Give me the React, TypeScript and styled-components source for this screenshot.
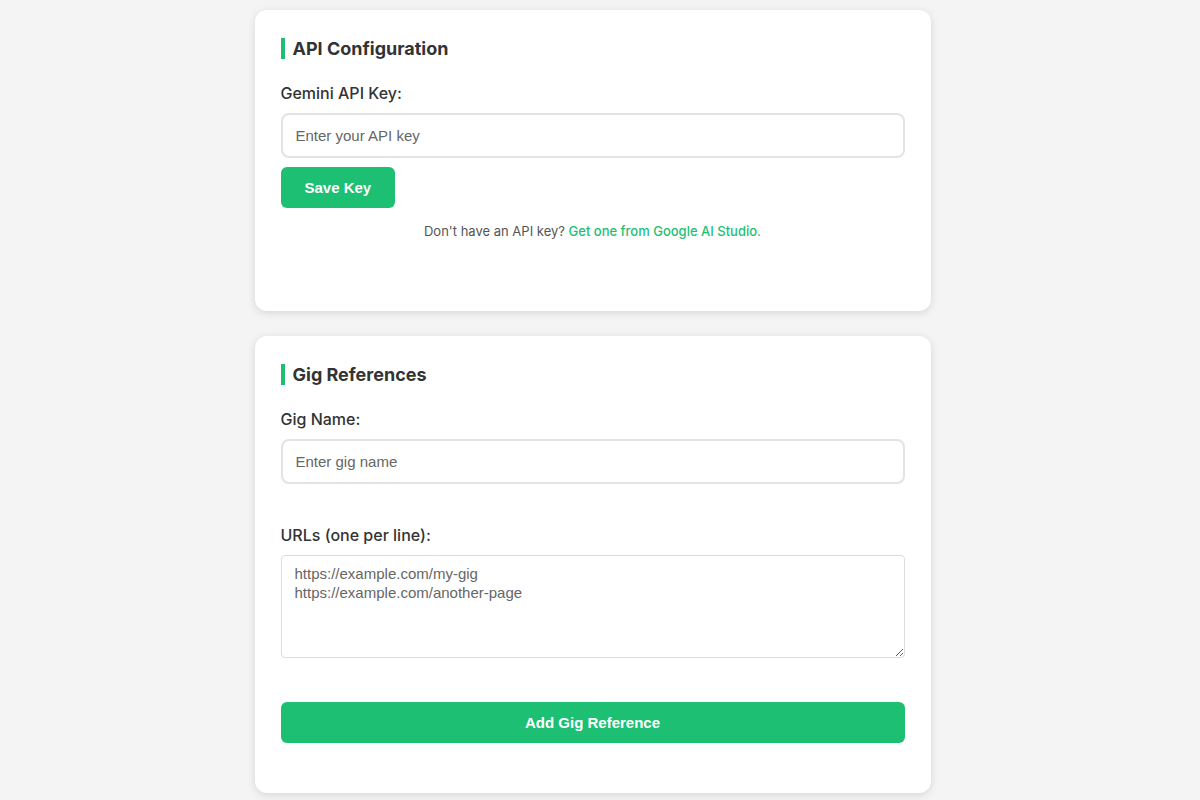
import styled, { createGlobalStyle } from "styled-components";

const green = "#1dbf73";

const GlobalStyle = createGlobalStyle`
  html, body {
    margin: 0;
    padding: 0;
    background: #f4f4f4;
    font-family: Inter, "Noto Sans", sans-serif;
    color: #333;
  }
  * {
    box-sizing: border-box;
  }
`;

const Page = styled.div`
  display: flex;
  flex-direction: column;
  align-items: center;
  gap: 25px;
  padding: 10px 15px 20px 0;
`;

const Card = styled.section`
  width: 676px;
  background: #fff;
  border-radius: 12px;
  box-shadow: 0 2px 8px rgba(0, 0, 0, 0.12);
  padding: 28px 26px 50px;
`;

const Title = styled.h2`
  margin: 0 0 24px;
  padding-left: 8px;
  border-left: 4px solid ${green};
  font-size: 18px;
  line-height: 21px;
  font-weight: 700;
  color: #333;
`;

const Group = styled.div<{ $gap?: number }>`
  display: flex;
  flex-direction: column;
  margin-bottom: ${(p) => p.$gap ?? 9}px;
`;

const Label = styled.label`
  font-size: 16px;
  line-height: 20px;
  font-weight: 500;
  color: #333;
  margin-bottom: 10px;
`;

const Input = styled.input`
  width: 100%;
  height: 45px;
  padding: 0 13px;
  border: 2px solid #e3e3e3;
  border-radius: 8px;
  font-family: "Liberation Sans", Arial, sans-serif;
  font-size: 15px;
  color: #333;
  outline: none;
  &::placeholder {
    color: #666;
  }
`;

const TextArea = styled.textarea`
  width: 100%;
  height: 103px;
  padding: 8px 13px;
  border: 1px solid #ddd;
  border-radius: 4px;
  font-family: "Liberation Sans", Arial, sans-serif;
  font-size: 15px;
  line-height: 19px;
  color: #555;
  resize: vertical;
  outline: none;
  &::placeholder {
    color: #666;
  }
`;

const Button = styled.button<{ $full?: boolean }>`
  width: ${(p) => (p.$full ? "100%" : "auto")};
  height: 41px;
  padding: 0 24px;
  border: none;
  border-radius: 6px;
  background: ${green};
  color: #fff;
  font-family: "Liberation Sans", Arial, sans-serif;
  font-size: 15px;
  font-weight: 700;
  cursor: pointer;
`;

const Help = styled.p`
  margin: 15px 0 22px;
  text-align: center;
  font-size: 13px;
  color: #555;
  a {
    color: ${green};
    font-weight: 500;
    text-decoration: none;
  }
`;

const App = () => (
  <>
    <GlobalStyle />
    <Page>
      <Card>
        <Title>API Configuration</Title>
        <Group>
          <Label>Gemini API Key:</Label>
          <Input type="password" placeholder="Enter your API key" />
        </Group>
        <Button>Save Key</Button>
        <Help>
          Don't have an API key?{" "}
          <a href="#">Get one from Google AI Studio.</a>
        </Help>
      </Card>
      <Card>
        <Title>Gig References</Title>
        <Group $gap={41}>
          <Label>Gig Name:</Label>
          <Input placeholder="Enter gig name" />
        </Group>
        <Group $gap={44}>
          <Label>URLs (one per line):</Label>
          <TextArea
            placeholder={"https://example.com/my-gig\nhttps://example.com/another-page"}
          />
        </Group>
        <Button $full>Add Gig Reference</Button>
      </Card>
    </Page>
  </>
);

export default App;
